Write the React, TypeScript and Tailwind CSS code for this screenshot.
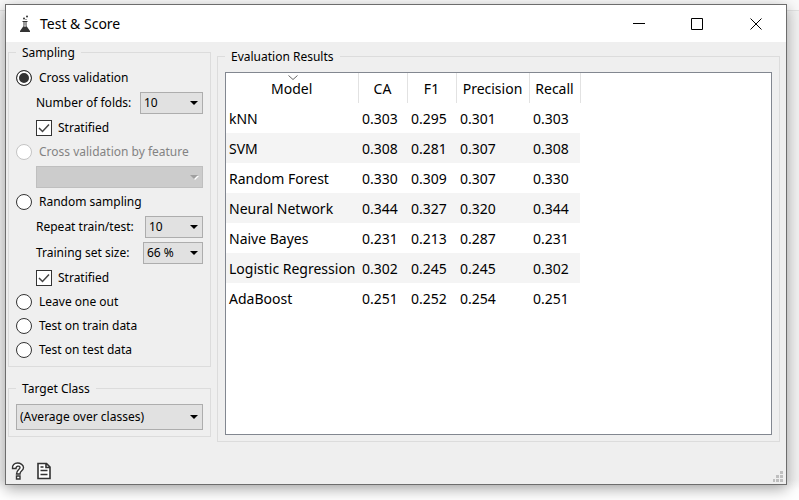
import React, { useState } from "react";

const results = [
  ["kNN", "0.303", "0.295", "0.301", "0.303"],
  ["SVM", "0.308", "0.281", "0.307", "0.308"],
  ["Random Forest", "0.330", "0.309", "0.307", "0.330"],
  ["Neural Network", "0.344", "0.327", "0.320", "0.344"],
  ["Naive Bayes", "0.231", "0.213", "0.287", "0.231"],
  ["Logistic Regression", "0.302", "0.245", "0.245", "0.302"],
  ["AdaBoost", "0.251", "0.252", "0.254", "0.251"],
];

const columns = [
  { name: "Model", width: "w-[132px]" },
  { name: "CA", width: "w-[49px]" },
  { name: "F1", width: "w-[49px]" },
  { name: "Precision", width: "w-[73px]" },
  { name: "Recall", width: "w-[51px]" },
];

function Group({ title, className = "", children }: { title: string; className?: string; children: React.ReactNode }) {
  return (
    <fieldset className={`min-w-0 border border-[#dcdcdc] px-[7px] ${className}`}>
      <legend className="px-[6px] leading-[17px]">{title}</legend>
      {children}
    </fieldset>
  );
}

function Radio({ label, checked, disabled, onChange }: { label: string; checked: boolean; disabled?: boolean; onChange: () => void }) {
  return (
    <label className={`flex h-6 items-center gap-[7px] ${disabled ? "text-[#838383]" : ""}`}>
      <input
        type="radio"
        name="sampling"
        checked={checked}
        disabled={disabled}
        onChange={onChange}
        className="size-4 shrink-0 appearance-none rounded-full border border-[#333] bg-white checked:bg-[#333] checked:shadow-[inset_0_0_0_2px_white] disabled:border-[#c4c4c4]"
      />
      {label}
    </label>
  );
}

function Check({ label }: { label: string }) {
  const [on, setOn] = useState(true);
  return (
    <label className="ml-5 flex h-6 items-center gap-[6px]">
      <span className="grid size-4 shrink-0">
        <input
          type="checkbox"
          checked={on}
          onChange={() => setOn(!on)}
          className="col-start-1 row-start-1 size-4 appearance-none border border-[#333] bg-white"
        />
        {on && (
          <svg viewBox="0 0 16 16" className="pointer-events-none col-start-1 row-start-1 size-4" fill="none" stroke="#444" strokeWidth="1.5">
            <path d="M3 8l3.500 3.500L13 4.500" />
          </svg>
        )}
      </span>
      {label}
    </label>
  );
}

function Select({ label, options, disabled, className = "" }: { label: string; options: string[]; disabled?: boolean; className?: string }) {
  return (
    <span className={`grid ${className}`}>
      <select
        aria-label={label}
        disabled={disabled}
        className="col-start-1 row-start-1 w-full appearance-none border border-[#adadad] bg-[#e1e1e1] pr-4 pl-[3px] text-black disabled:border-[#bfbfbf] disabled:bg-[#cccccc] disabled:opacity-100"
      >
        {options.map((option) => (
          <option key={option}>{option}</option>
        ))}
      </select>
      <svg viewBox="0 0 9 5" className="pointer-events-none col-start-1 row-start-1 mr-1 h-[5px] w-[9px] self-center justify-self-end">
        {disabled && <path d="M2 1h7L5 5z" fill="#fff" />}
        <path d="M0 0h8L4 4z" fill={disabled ? "#a0a0a0" : "#000"} />
      </svg>
    </span>
  );
}

export default function App() {
  const [mode, setMode] = useState("cv");
  return (
    <div className="flex min-h-screen flex-col bg-[linear-gradient(#fafafa_10px,#e2e2e2_10px,#e2e2e2_11px,#f2f2f2_11px,#f2f2f2_480px,#fff_490px)] pt-1 pr-3 pb-[15px] pl-[5px] font-['Noto_Sans',sans-serif] text-[12px] text-black">
      <main className="flex flex-1 flex-col border border-[#6d6d6d] bg-[#efefef] shadow-[0_4px_14px_rgba(0,0,0,0.35)]">
        <header className="flex h-[37px] items-center bg-white pl-3">
          <svg viewBox="0 0 14 18" className="h-[18px] w-[14px]" fill="#333">
            <path d="M4.500 6h5v1h-1v4l3.500 5v1H2v-1l3.500-5V7h-1z" />
            <path d="M6.500 7h1v3.500l1 1h-3l1-1z" fill="#fff" />
            <circle cx="6" cy="3.500" r="1" />
            <circle cx="9" cy="1.500" r="1" />
            <circle cx="8" cy="4.500" r="0.600" />
          </svg>
          <h1 className="ml-2 flex-1 text-[14px]">Test &amp; Score</h1>
          <div className="flex">
            <button aria-label="Minimize" className="grid h-9 w-[58px] place-items-center">
              <svg viewBox="0 0 12 12" className="size-3" stroke="#000"><path d="M0 5.500h12" /></svg>
            </button>
            <button aria-label="Maximize" className="grid h-9 w-[58px] place-items-center">
              <svg viewBox="0 0 12 12" className="size-3" stroke="#000" fill="none"><path d="M.5.5h11v11H.5z" /></svg>
            </button>
            <button aria-label="Close" className="grid h-9 w-[60px] place-items-center">
              <svg viewBox="0 0 12 12" className="size-3" stroke="#000"><path d="M.5.5l11 11M11.500.5l-11 11" /></svg>
            </button>
          </div>
        </header>

        <div className="flex flex-1 gap-[6px] pt-[2px] pr-[6px] pl-[2px]">
          <section className="flex w-[203px] shrink-0 flex-col">
            <Group title="Sampling" className="pb-1">
              <div className="mt-[5px]">
                <Radio label="Cross validation" checked={mode === "cv"} onChange={() => setMode("cv")} />
              </div>
              <div className="ml-5 flex h-[26px] items-center justify-between">
                <span>Number of folds:</span>
                <Select label="Number of folds" options={["10", "5", "3", "2"]} className="h-[22px] w-[63px]" />
              </div>
              <Check label="Stratified" />
              <Radio label="Cross validation by feature" checked={false} disabled onChange={() => {}} />
              <div className="ml-5 flex h-[26px] items-center">
                <Select label="Feature" options={[""]} disabled className="h-[22px] w-full" />
              </div>
              <Radio label="Random sampling" checked={mode === "random"} onChange={() => setMode("random")} />
              <div className="ml-5 flex h-[26px] items-center justify-between">
                <span>Repeat train/test:</span>
                <Select label="Repeat train/test" options={["10", "5", "20"]} className="h-[22px] w-[58px]" />
              </div>
              <div className="ml-5 flex h-[26px] items-center justify-between">
                <span>Training set size:</span>
                <Select label="Training set size" options={["66 %", "75 %", "80 %"]} className="h-[22px] w-[60px]" />
              </div>
              <Check label="Stratified" />
              <Radio label="Leave one out" checked={mode === "loo"} onChange={() => setMode("loo")} />
              <Radio label="Test on train data" checked={mode === "train"} onChange={() => setMode("train")} />
              <Radio label="Test on test data" checked={mode === "test"} onChange={() => setMode("test")} />
            </Group>
            <Group title="Target Class" className="mt-[13px] pb-[6px]">
              <Select label="Target class" options={["(Average over classes)"]} className="mt-[7px] h-[26px] w-full" />
            </Group>
          </section>

          <Group title="Evaluation Results" className="mt-1 flex-1 pb-[6px]">
            <div className="mt-[7px] h-[363px] overflow-hidden border border-[#828790] bg-white text-[14px]">
              <table className="table-fixed border-collapse">
                <thead>
                  <tr className="h-[30px]">
                    {columns.map((column, i) => (
                      <th key={column.name} className={`relative border-r border-[#e2e2e2] p-0 text-center font-normal ${column.width}`}>
                        {i === 0 && (
                          <svg viewBox="0 0 10 5" className="absolute top-[2px] left-[62px] h-[5px] w-[10px]" fill="none" stroke="#666">
                            <path d="M.5.5L5 4.500 9.500.5" />
                          </svg>
                        )}
                        {column.name}
                      </th>
                    ))}
                  </tr>
                </thead>
                <tbody>
                  {results.map((row) => (
                    <tr key={row[0]} className="h-[30px] even:bg-[#f4f4f4]">
                      {row.map((value, i) => (
                        <td key={i} className={`p-0 whitespace-nowrap ${i === 0 ? "pl-[3px]" : "pl-1"}`}>{value}</td>
                      ))}
                    </tr>
                  ))}
                </tbody>
              </table>
            </div>
          </Group>
        </div>

        <footer className="flex h-[42px] items-end pr-[3px] pb-[2px] pl-[5px]">
          <button aria-label="Help" className="pb-[2px]">
            <svg viewBox="0 0 14 18" className="h-[18px] w-[14px]" fill="#fff" stroke="#333" strokeWidth="1.4">
              <path d="M1.500 6.500C1 3 3.500 1 6.500 1S12.500 3 12.500 5.500C12.500 9 9 8.500 9 12H5.500C5.500 8 9 7.500 9 5.500 9 3.500 5 3.500 5 6.500z" />
              <path d="M5.500 14h3.500v3H5.500z" />
            </svg>
          </button>
          <button aria-label="Report" className="ml-3 pb-[2px]">
            <svg viewBox="0 0 14 18" className="h-[18px] w-[14px]" fill="#fff" stroke="#333" strokeWidth="1.600">
              <path d="M1 1.500h8.500L13 5v11.500H1zM9 1.500V5.500h4M3.500 5h3M3.500 8.500h7M3.500 12.500h7" />
            </svg>
          </button>
          <svg viewBox="0 0 11 11" className="ml-auto size-[11px]" fill="#bfbfbf">
            <path d="M8 0h3v3H8zM4 4h3v3H4zM8 4h3v3H8zM1 8h2v3H1zM4 8h3v3H4zM8 8h3v3H8z" />
          </svg>
        </footer>
      </main>
    </div>
  );
}
